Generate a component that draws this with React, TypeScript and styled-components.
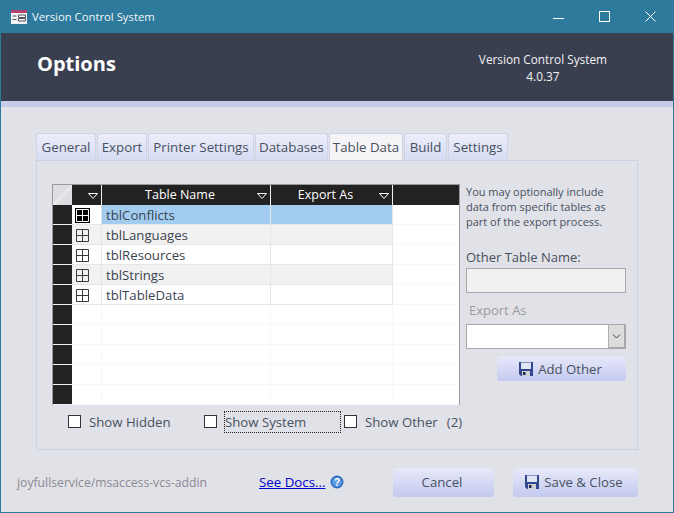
import styled, { createGlobalStyle } from 'styled-components'

const GlobalStyle = createGlobalStyle`
  html, body {
    margin: 0;
    padding: 0;
    background: #e1e1e8;
  }
  * {
    box-sizing: border-box;
  }
`

const tabs = ['General', 'Export', 'Printer Settings', 'Databases', 'Table Data', 'Build', 'Settings']
const tabWidths = [60, 50, 106, 73, 74, 43, 60]
const tables = ['tblConflicts', 'tblLanguages', 'tblResources', 'tblStrings', 'tblTableData', '', '', '', '', '']

function TableIcon({ selected }: { selected?: boolean }) {
  const color = selected ? '#ffffff' : '#3c3c3c'
  return (
    <svg width="15" height="15" viewBox="0 0 15 15">
      {selected && <rect width="15" height="15" fill="#000" />}
      <path d="M1.5 1.5h12v12h-12zM7.5 1.5v12M1.5 7.5h12" fill="none" stroke={color} strokeWidth="1" />
    </svg>
  )
}

function SaveIcon() {
  return (
    <svg width="14" height="14" viewBox="0 0 14 14">
      <path d="M0 0h14v14H2l-2-2z" fill="#34468f" />
      <rect x="2" y="0.5" width="10" height="6.5" fill="#dfe6f4" />
      <rect x="3" y="9" width="8" height="5" fill="#cfcfd6" />
      <rect x="4" y="10" width="2.5" height="3" fill="#232a50" />
    </svg>
  )
}

function DropArrow() {
  return (
    <svg width="10" height="6" viewBox="0 0 10 6">
      <path d="M0.5 0.5h9L5 5.5z" fill="none" stroke="#ffffff" strokeWidth="1" />
    </svg>
  )
}

function App() {
  return (
    <>
      <GlobalStyle />
      <Window>
        <TitleBar>
          <TitleLeft>
            <svg width="16" height="14" viewBox="0 0 16 14">
              <rect width="16" height="14" fill="#f4f4f8" />
              <rect width="16" height="3" fill="#b3406f" />
              <path d="M1.5 6h4M1.5 9.5h4" stroke="#555" strokeWidth="1.2" />
              <path d="M7.5 5h7v2.5h-7zM7.5 8.5h7V11h-7z" fill="none" stroke="#555" />
            </svg>
            <span>Version Control System</span>
          </TitleLeft>
          <WindowButtons>
            <svg width="11" height="11" viewBox="0 0 11 11">
              <path d="M0 7.5h11" stroke="#fff" />
            </svg>
            <svg width="11" height="11" viewBox="0 0 11 11">
              <rect x="0.5" y="0.5" width="10" height="10" fill="none" stroke="#fff" />
            </svg>
            <svg width="11" height="11" viewBox="0 0 11 11">
              <path d="M0.5 0.5l10 10M10.5 0.5l-10 10" stroke="#fff" />
            </svg>
          </WindowButtons>
        </TitleBar>
        <Header>
          <HeaderTitle>Options</HeaderTitle>
          <HeaderInfo>
            <div>Version Control System</div>
            <div>4.0.37</div>
          </HeaderInfo>
        </Header>
        <Strip />
        <Body>
          <TabRow>
            {tabs.map((tab, i) => (
              <Tab key={tab} $active={tab === 'Table Data'} style={{ width: tabWidths[i] }}>
                {tab}
              </Tab>
            ))}
          </TabRow>
          <Panel>
            <PanelMain>
              <Grid>
                <GridHeader>
                  <CornerCell />
                  <HeaderCell $width={30}>
                    <DropSlot>
                      <DropArrow />
                    </DropSlot>
                  </HeaderCell>
                  <HeaderCell $width={169}>
                    Table Name
                    <DropSlot>
                      <DropArrow />
                    </DropSlot>
                  </HeaderCell>
                  <HeaderCell $width={122}>
                    Export As
                    <DropSlot>
                      <DropArrow />
                    </DropSlot>
                  </HeaderCell>
                  <HeaderFill />
                </GridHeader>
                {tables.map((name, i) => (
                  <GridRow key={i}>
                    <Selector />
                    <IconCell $filled={!!name} $alt={i % 2 === 1}>
                      {name && <TableIcon selected={i === 0} />}
                    </IconCell>
                    <NameCell $filled={!!name} $alt={i % 2 === 1} $selected={i === 0}>
                      {name}
                    </NameCell>
                    <ExportCell $filled={!!name} $alt={i % 2 === 1} $selected={i === 0} />
                    <FillCell />
                  </GridRow>
                ))}
              </Grid>
              <SideColumn>
                <HelpText>
                  You may optionally include data from specific tables as part of the export process.
                </HelpText>
                <FieldLabel>Other Table Name:</FieldLabel>
                <TextBox />
                <DisabledLabel>Export As</DisabledLabel>
                <Combo>
                  <ComboButton>
                    <svg width="9" height="5" viewBox="0 0 9 5">
                      <path d="M1 0.5l3.5 3.5L8 0.5" fill="none" stroke="#444" />
                    </svg>
                  </ComboButton>
                </Combo>
                <SmallButton>
                  <SaveIcon />
                  Add Other
                </SmallButton>
              </SideColumn>
            </PanelMain>
            <CheckRow>
              <CheckItem $width={136}>
                <CheckBox />
                <CheckLabel>Show Hidden</CheckLabel>
              </CheckItem>
              <CheckItem $width={140}>
                <CheckBox />
                <FocusLabel>Show System</FocusLabel>
              </CheckItem>
              <CheckItem $width={130}>
                <CheckBox />
                <CheckLabel>Show Other</CheckLabel>
                <CountLabel>(2)</CountLabel>
              </CheckItem>
            </CheckRow>
          </Panel>
          <Footer>
            <RepoText>joyfullservice/msaccess-vcs-addin</RepoText>
            <DocsLink href="#">See Docs...</DocsLink>
            <svg width="14" height="14" viewBox="0 0 14 14">
              <circle cx="7" cy="7" r="6.5" fill="#2f6fc4" />
              <circle cx="7" cy="7" r="4.8" fill="#5b9be0" />
              <text x="7" y="10.5" fontSize="10" fontWeight="700" textAnchor="middle" fill="#fff" fontFamily="Liberation Sans, sans-serif">
                ?
              </text>
            </svg>
            <FooterButtons>
              <FooterButton $width={101}>Cancel</FooterButton>
              <FooterButton $width={125}>
                <SaveIcon />
                Save &amp; Close
              </FooterButton>
            </FooterButtons>
          </Footer>
        </Body>
      </Window>
    </>
  )
}

export default App

const Window = styled.div`
  width: 674px;
  height: 513px;
  display: flex;
  flex-direction: column;
  border: 1px solid #2f7a9b;
  border-top: 0;
  background: #e1e1e8;
  font-family: 'Open Sans', 'Noto Sans', sans-serif;
  color: #47515f;
  overflow: hidden;
`

const TitleBar = styled.div`
  flex: 0 0 33px;
  display: flex;
  align-items: center;
  justify-content: space-between;
  background: #2d7a9c;
  color: #f2f6f8;
  font-size: 11.3px;
  padding: 0 17px 0 10px;
`

const TitleLeft = styled.div`
  display: flex;
  align-items: center;
  gap: 5px;
`

const WindowButtons = styled.div`
  display: flex;
  align-items: center;
  gap: 35px;
`

const Header = styled.div`
  flex: 0 0 68px;
  display: flex;
  align-items: flex-start;
  justify-content: space-between;
  background: #3a3f50;
  color: #ffffff;
  padding: 0 66px 0 36px;
`

const HeaderTitle = styled.div`
  margin-top: 14px;
  font-size: 20px;
  line-height: 33px;
  font-weight: 700;
`

const HeaderInfo = styled.div`
  margin-top: 18px;
  font-size: 11.8px;
  line-height: 17px;
  text-align: center;
  color: #f2f2f4;
`

const Strip = styled.div`
  flex: 0 0 6px;
  background: #c5cbe9;
`

const Body = styled.div`
  flex: 1;
  display: flex;
  flex-direction: column;
  padding: 26px 35px 0;
`

const TabRow = styled.div`
  display: flex;
  gap: 1px;
  height: 27px;
`

const Tab = styled.div<{ $active?: boolean }>`
  height: 27px;
  display: flex;
  align-items: center;
  justify-content: center;
  font-size: 13.3px;
  white-space: nowrap;
  border: 1px solid #cfd3e8;
  border-bottom: 0;
  border-radius: 3px 3px 0 0;
  background: ${(p) => (p.$active ? '#f4f4f7' : 'linear-gradient(#eceef9, #d6dbf3)')};
`

const Panel = styled.div`
  width: 602px;
  height: 290px;
  display: flex;
  flex-direction: column;
  border: 1px solid #cdd0e2;
  padding: 23px 11px 0 15px;
`

const PanelMain = styled.div`
  display: flex;
  gap: 6px;
`

const Grid = styled.div`
  width: 408px;
  height: 221px;
  display: flex;
  flex-direction: column;
  background: #ffffff;
  border: 1px solid #9a9a9e;
`

const GridHeader = styled.div`
  flex: 0 0 20px;
  display: flex;
  background: #222222;
  color: #ffffff;
  font-size: 12.5px;
`

const CornerCell = styled.div`
  flex: 0 0 19px;
  background: linear-gradient(135deg, #dedee2 45%, #eeeef0 50%, #dedee2 60%);
`

const HeaderCell = styled.div<{ $width: number }>`
  position: relative;
  flex: 0 0 ${(p) => p.$width}px;
  display: flex;
  align-items: center;
  justify-content: center;
  padding: 0 12px 2px 0;
  border-right: 1px solid #f0f0f0;
  white-space: nowrap;
`

const DropSlot = styled.span`
  position: absolute;
  right: 3px;
  top: 8px;
  display: flex;
`

const HeaderFill = styled.div`
  flex: 1;
`

const GridRow = styled.div`
  flex: 0 0 20px;
  display: flex;
`

const Selector = styled.div`
  flex: 0 0 19px;
  background: #222222;
  border-bottom: 1px solid #f0f0f0;
`

const cellBackground = (p: { $alt?: boolean; $filled?: boolean; $selected?: boolean }) =>
  p.$selected ? '#a3cdf0' : p.$alt && p.$filled ? '#f1f1f1' : '#ffffff'

const IconCell = styled.div<{ $alt?: boolean; $filled?: boolean }>`
  flex: 0 0 30px;
  display: flex;
  align-items: center;
  padding: 2px 0 0 3px;
  background: ${(p) => cellBackground({ ...p, $selected: false })};
  border-right: 1px solid ${(p) => (p.$filled ? '#e6e6e6' : '#f8f8f8')};
  border-bottom: 1px solid ${(p) => (p.$filled ? '#e6e6e6' : '#f6f6f6')};
`

const NameCell = styled.div<{ $alt?: boolean; $filled?: boolean; $selected?: boolean }>`
  flex: 0 0 169px;
  display: flex;
  align-items: center;
  padding-left: 4px;
  font-size: 13.2px;
  color: #3a4450;
  background: ${cellBackground};
  border-right: 1px solid ${(p) => (p.$filled ? '#e6e6e6' : '#f8f8f8')};
  border-bottom: 1px solid ${(p) => (p.$filled ? '#e6e6e6' : '#f6f6f6')};
`

const ExportCell = styled.div<{ $alt?: boolean; $filled?: boolean; $selected?: boolean }>`
  flex: 0 0 122px;
  background: ${cellBackground};
  border-right: 1px solid ${(p) => (p.$filled ? '#e6e6e6' : '#f8f8f8')};
  border-bottom: 1px solid ${(p) => (p.$filled ? '#e6e6e6' : '#f6f6f6')};
`

const FillCell = styled.div`
  flex: 1;
  border-bottom: 1px solid #f6f6f6;
`

const SideColumn = styled.div`
  width: 160px;
  display: flex;
  flex-direction: column;
`

const HelpText = styled.div`
  font-size: 11px;
  line-height: 15px;
`

const FieldLabel = styled.div`
  margin-top: 19px;
  font-size: 13px;
  line-height: 18px;
`

const TextBox = styled.div`
  margin-top: 2px;
  width: 160px;
  height: 25px;
  background: #f1f1f1;
  border: 1px solid #a8a8a8;
`

const DisabledLabel = styled.div`
  margin-top: 7px;
  padding-left: 3px;
  font-size: 13px;
  line-height: 20px;
  color: #9b9ba0;
`

const Combo = styled.div`
  margin-top: 4px;
  width: 160px;
  height: 25px;
  display: flex;
  justify-content: flex-end;
  background: #ffffff;
  border: 1px solid #a8a8a8;
`

const ComboButton = styled.div`
  width: 17px;
  display: flex;
  align-items: center;
  justify-content: center;
  background: #dcdcdc;
  border-left: 1px solid #b0b0b0;
  border-right: 1px solid #a8a8a8;
  border-bottom: 1px solid #a8a8a8;
`

const SmallButton = styled.div`
  margin: 7px 0 0 31px;
  padding-right: 2px;
  width: 129px;
  height: 25px;
  display: flex;
  align-items: center;
  justify-content: center;
  gap: 5px;
  font-size: 13.2px;
  border-radius: 3px;
  background: linear-gradient(#e7e9f9, #c4c9f0);
`

const CheckRow = styled.div`
  display: flex;
  align-items: center;
  margin-top: 5px;
  padding-left: 16px;
  height: 23px;
`

const CheckItem = styled.div<{ $width: number }>`
  flex: 0 0 ${(p) => p.$width}px;
  display: flex;
  align-items: center;
`

const CheckBox = styled.div`
  flex: 0 0 13px;
  height: 13px;
  background: #ffffff;
  border: 1px solid #333333;
`

const CheckLabel = styled.div`
  margin-left: 8px;
  font-size: 13.2px;
  white-space: nowrap;
`

const FocusLabel = styled.div`
  margin-left: 7px;
  padding-left: 1px;
  width: 117px;
  height: 22px;
  display: flex;
  align-items: center;
  font-size: 13.2px;
  outline: 1px dotted #222222;
  outline-offset: -1px;
`

const CountLabel = styled.div`
  margin-left: 9px;
  font-size: 13.2px;
`

const Footer = styled.div`
  display: flex;
  align-items: center;
  margin-top: 17px;
  height: 30px;
`

const RepoText = styled.div`
  margin-left: -19px;
  width: 242px;
  font-size: 12.2px;
  color: #8a8a90;
  white-space: nowrap;
`

const DocsLink = styled.a`
  margin-right: 4px;
  font-size: 13.3px;
  color: #0000cc;
`

const FooterButtons = styled.div`
  margin-left: auto;
  display: flex;
  gap: 19px;
`

const FooterButton = styled.div<{ $width: number }>`
  width: ${(p) => p.$width}px;
  height: 29px;
  padding-right: 3px;
  display: flex;
  align-items: center;
  justify-content: center;
  gap: 5px;
  font-size: 13.2px;
  border-radius: 3px;
  background: linear-gradient(#e7e9f9, #c4c9f0);
`
